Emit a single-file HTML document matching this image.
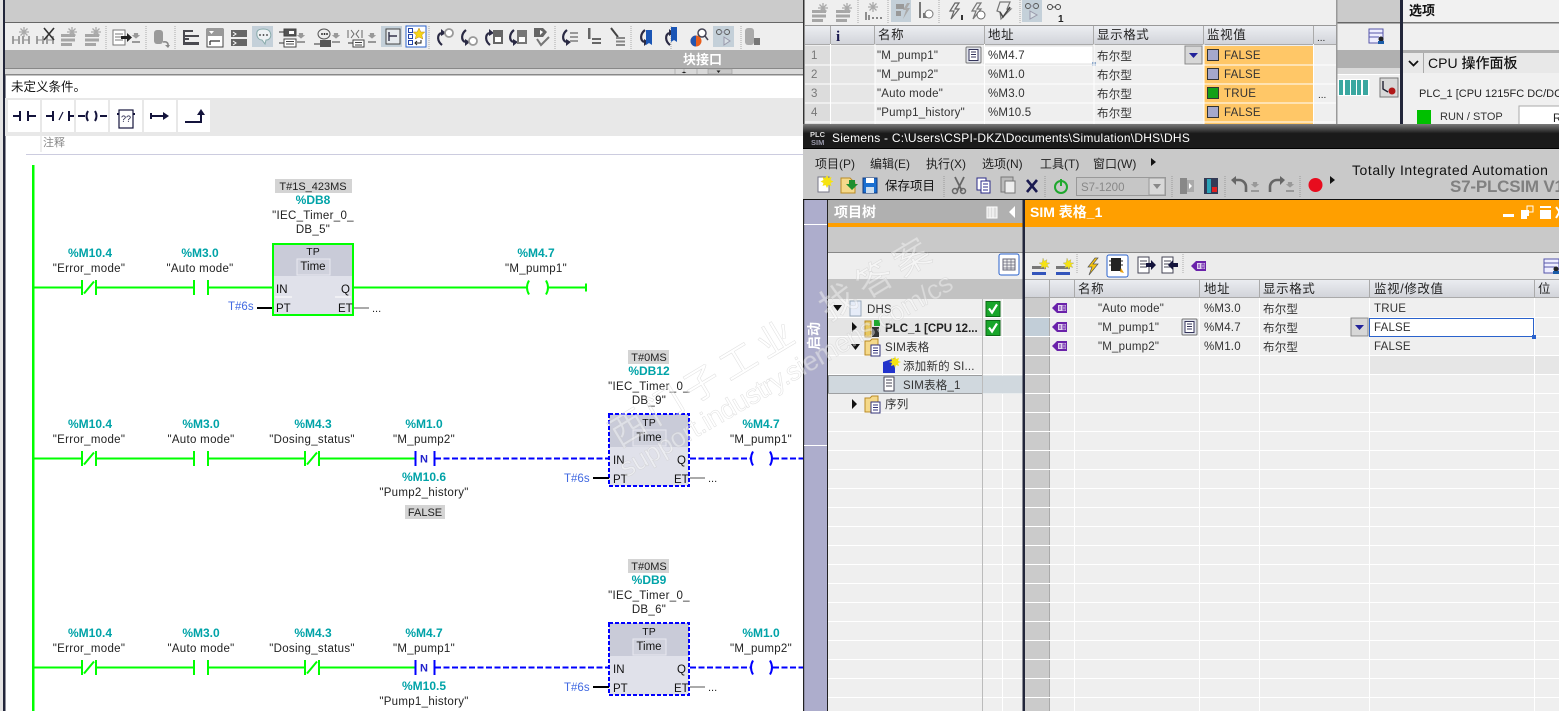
<!DOCTYPE html>
<html><head><meta charset="utf-8"><title>TIA Portal</title>
<style>
html,body{margin:0;padding:0;width:1559px;height:711px;overflow:hidden;background:#fff}
svg{display:block}
text{font-family:"Liberation Sans","Noto Sans CJK SC",sans-serif;font-size:12px;fill:#222}
.t{fill:#00a3a8;font-weight:bold;text-anchor:middle;font-size:12px}
.q{text-anchor:middle;font-size:11.5px;letter-spacing:.3px}
.c{text-anchor:middle}
.p{fill:#4169e1;font-size:11.5px}
.h{font-size:12.5px;letter-spacing:.6px;fill:#222}
.r{font-size:11.5px;letter-spacing:.2px;fill:#333}
.m{font-size:12px;fill:#222}
</style></head><body>
<svg width="1559" height="711" viewBox="0 0 1559 711" xmlns="http://www.w3.org/2000/svg">
<defs>
<linearGradient id="hd" x1="0" y1="0" x2="0" y2="1"><stop offset="0" stop-color="#eceef2"/><stop offset="1" stop-color="#d2d4da"/></linearGradient>
<linearGradient id="tb" x1="0" y1="0" x2="0" y2="1"><stop offset="0" stop-color="#7c7c7c"/><stop offset=".38" stop-color="#1a1a1a"/><stop offset="1" stop-color="#1a1a1a"/></linearGradient>
<g id="nc" fill="none" stroke-width="2"><path d="M0-7.5V7.5M14-7.5V7.5M2 6 12-6"/></g>
<g id="no" fill="none" stroke-width="2"><path d="M0-7.5V7.5M14-7.5V7.5"/></g>
<g id="coil" fill="none" stroke-width="2"><path d="M2-7Q-2 0 2 7M19-7Q23 0 19 7"/></g>
<g id="ast"><path d="M0-5v10M-5 0h10M-3.500-3.500l7 7M3.500-3.500l-7 7" stroke="#aaa" stroke-width="1.300"/></g>
<g id="bars"><path d="M0 7h14v3H0zM0 11.500h14v3H0zM0 16h11v3H0z" fill="#a6a6a6"/><use href="#ast" x="11" y="5"/></g>
<g id="rungst"><path d="M0 9v8M6 9v8M10 9v8M16 9v8" stroke="#8a8a8a" stroke-width="1.600"/><path d="M0 13h5M11 13h5" stroke="#8a8a8a"/></g>
<g id="barsY"><path d="M0 8h14v3H0z" fill="#777"/><path d="M0 14h14v3H0z" fill="#3355bb"/><path d="M11 0l1.300 3.200L15 1.500l-.6 3.200 3.600.3-3 1.800 2 2.700-3.200-.8-.8 3-1.400-3-3 1.300 1.200-3L7 5l3.200-.5z" fill="#f6e312" stroke="#997" stroke-width=".3"/></g>
<g id="doc"><path d="M0 0h12v19H0z" fill="#fff" stroke="#55557a"/><path d="M2 4h8M2 7h8M2 10h8M2 13h8" stroke="#55557a"/></g>
<g id="arrowd"><path d="M-3 0h6v3h3l-6 5-6-5h3z" fill="#999" transform="scale(.7)"/><path d="M-4 8h8v2h-8z" fill="#999"/></g>
<g id="lup"><path d="M5 17C0 13 0 7 4 5" fill="none" stroke="#2a2a44" stroke-width="2.200"/><path d="M4 1l5 4-5 3z" fill="#2a2a44"/></g>
<g id="ldn"><path d="M5 1C0 5 0 11 4 13" fill="none" stroke="#2a2a44" stroke-width="2.200"/><path d="M4 10l5 3-5 4z" fill="#2a2a44"/></g>
<g id="tag"><path d="M0 6 5 1h10v10H5z" fill="#6a22aa"/><path d="M6 3h8v6H6z" fill="#fff" fill-opacity=".8"/><path d="M8 4v4M11 4h2v4h-2z" stroke="#6a22aa" fill="none"/></g>
<g id="chk"><rect width="14" height="15" fill="#18a52a" stroke="#0b6a16"/><path d="M3 7l3 4 5-8" fill="none" stroke="#fff" stroke-width="2.200"/></g>
<g id="lbtn"><rect width="15" height="16" rx="1" fill="#dfe2ea" stroke="#777"/><rect x="3" y="2.500" width="9" height="11" fill="#fff" stroke="#33335a"/><path d="M5 5h5M5 7.500h5M5 10h5" stroke="#33335a"/></g>
<g id="dd"><rect width="17" height="18" fill="#d7d7d7" stroke="#888"/><path d="M4 7h9l-4.500 5z" fill="#22229a"/></g>
<g id="fold"><path d="M0 3h5l2-2h6v16H0z" fill="#f5d98a" stroke="#b98a25"/><rect x="6" y="7" width="9" height="11" fill="#fff" stroke="#33337a"/><path d="M8 10h5M8 12.500h5M8 15h5" stroke="#33337a"/></g>
</defs>

<!-- page -->
<rect width="1559" height="711" fill="#fff"/>
<!-- left editor chrome -->
<rect x="0" y="0" width="3" height="711" fill="#e4e4e4"/>
<rect x="3" y="0" width="2.500" height="711" fill="#22263a"/>
<rect x="5" y="0" width="798" height="22" fill="#cbcbcb"/>
<rect x="5" y="22" width="798" height="1.500" fill="#666"/>
<rect x="5" y="23" width="798" height="27" fill="#eeeeee"/>
<rect x="5" y="50" width="798" height="18" fill="#b0b0b0"/>
<rect x="5" y="68" width="798" height="6" fill="#d9d9d9"/>
<rect x="5" y="68" width="798" height="1" fill="#888"/>
<rect x="5" y="74" width="798" height="1.500" fill="#888"/>
<path d="M675 69v5M684 69v5M697 69v5M708 69h24v5h-24z" stroke="#999" fill="#c8c8c8" stroke-width=".6"/>
<path d="M684 71.500 686.500 73h-5zM718.500 73l2-2.500h-4z" fill="#222"/>
<text x="683" y="64" style="font-size:13px;font-weight:bold;fill:#fff">块接口</text>
<text x="11" y="91" style="font-size:12.500px;fill:#111">未定义条件。</text>
<rect x="5" y="98" width="798" height="38" fill="#e8e8e8"/>
<g fill="#fff"><rect x="8" y="100" width="32" height="32"/><rect x="42" y="100" width="32" height="32"/><rect x="76" y="100" width="32" height="32"/><rect x="110" y="100" width="32" height="32"/><rect x="144" y="100" width="32" height="32"/><rect x="178" y="100" width="32" height="32"/></g>
<g fill="none" stroke="#14143c" stroke-width="2">
<path d="M13 116h7M20 111v10M28 111v10M28 116h8"/>
<path d="M46 116h7M53 111v10M69 111v10M69 116h5"/><path d="M63 112 59 120" stroke-width="1.200"/>
<path d="M78 116h7M100 116h7M88 111q-3 5 0 10M95 111q3 5 0 10"/>
<rect x="119" y="110" width="14" height="18" stroke-width="1.200"/><path d="M117 114h2M133 114h2"/>
<path d="M151 113v6M151 116h15"/>
<path d="M185 122h16v-7"/>
</g>
<path d="M163 112l6 4-6 4zM197 115l4-6 4 6z" fill="#14143c"/>
<text x="126" y="122" class="c" style="font-size:9px;fill:#14143c">??</text>
<rect x="40.500" y="136" width="1" height="16" fill="#ddd"/>
<text x="43" y="146" style="font-size:11px;fill:#888">注释</text>
<rect x="26" y="154" width="777" height="1" fill="#ccccdf"/>

<!-- left toolbar icons -->
<g transform="translate(0,27)">
<use href="#rungst" x="13"/><use href="#ast" x="24" y="5"/>
<use href="#rungst" x="37"/><path d="M44 1l10 12M54 1 44 13" stroke="#333" stroke-width="1.600"/>
<use href="#bars" x="61"/><use href="#bars" x="85"/>
<path d="M106-1v24" stroke="#aaa" stroke-dasharray="1 1"/>
<g transform="translate(113,3)"><rect width="12" height="15" fill="#fff" stroke="#777"/><path d="M2 4h8M2 7h8M2 10h8" stroke="#777"/><path d="M8 6h6V3l5 4.500-5 4.500V9H8z" fill="#222"/></g>
<use href="#arrowd" x="136" y="6"/>
<path d="M146-1v24M175-1v24" stroke="#aaa" stroke-dasharray="1 1"/>
<g transform="translate(154,3)"><rect width="9" height="14" rx="3" fill="#9a9a9a"/><path d="M9 12q6-1 5 5" fill="none" stroke="#888" stroke-width="1.600"/><path d="M11 15l3 3 2-3" fill="#888"/></g>
<g fill="#4a4a50"><path d="M183 3h10v2h-10zM183 8h16v2h-16zM183 11h6v2h-6zM183 15h16v3h-16z"/><path d="M183 3h2v15h-2z"/></g>
<g transform="translate(207,2)"><rect width="16" height="18" fill="#fff" stroke="#444"/><path d="M0 7h16V0H0z" fill="#999"/><path d="M2 2h5l-2.500 3z" fill="#fff"/><path d="M3 12h10M3 12v4" stroke="#333" stroke-width="1.300"/></g>
<g transform="translate(231,3)"><rect width="16" height="16" fill="#666"/><path d="M0 7h16v2H0z" fill="#eee"/><path d="M2 2l3 2-3 2M2 11l3 2-3 2" stroke="#fff" fill="none"/></g>
<rect x="252" y="-1" width="21" height="21" fill="#c4d0d9"/>
<path d="M257 5c1-4 11-4 13 0s0 8-4 8l-1 4-3-4c-3 0-6-3-5-8z" fill="#eef2f4" stroke="#8aa" stroke-width="1"/>
<circle cx="260" cy="8" r=".9" fill="#333"/><circle cx="263.500" cy="8" r=".9" fill="#333"/><circle cx="267" cy="8" r=".9" fill="#333"/>
<g transform="translate(279,2)"><rect x="5" width="12" height="7" fill="#555" stroke="#444"/><rect x="10" y="2" width="5" height="3" fill="#fff"/><rect x="5" y="10" width="12" height="8" fill="#fff" stroke="#444"/><path d="M7 12.500h8M7 15h8" stroke="#444"/><path d="M0 3h5M0 14h5" stroke="#333"/></g>
<use href="#arrowd" x="301" y="6"/>
<g transform="translate(314,2)"><ellipse cx="10" cy="5" rx="6" ry="5" fill="#eee" stroke="#555"/><circle cx="8" cy="5" r=".9"/><circle cx="10.500" cy="5" r=".9"/><circle cx="13" cy="5" r=".9"/><rect x="6" y="11" width="11" height="7" fill="#555"/><path d="M0 15h6" stroke="#333"/></g>
<use href="#arrowd" x="336" y="6"/>
<g transform="translate(348,1)"><path d="M0 2v8M3 2l3 4-3 4M14 2v8M11 2l-3 4 3 4" stroke="#666" fill="none"/><rect x="5" y="12" width="11" height="7" fill="#fff" stroke="#444"/><path d="M7 14.500h7M7 17h7" stroke="#444"/><path d="M0 15h5" stroke="#333"/></g>
<use href="#arrowd" x="372" y="6"/>
<rect x="381" y="-1" width="21" height="21" fill="#c4d0d9"/>
<rect x="386" y="2" width="14" height="15" fill="#e6eaee" stroke="#444"/>
<path d="M389 5v9M389 9h8" stroke="#33334a" stroke-width="1.400"/>
<rect x="406" y="-1" width="20" height="21" fill="#fff" stroke="#2a62cc"/>
<path d="M408.500 1.500h4v4h-4zM408.500 7.500h4v4h-4zM408.500 13.500h4v4h-4z" fill="#fff" stroke="#2244aa"/><path d="M419 1l1.800 4h4l-3 3 1 4-3.800-2-3.800 2 1-4-3-3h4z" fill="#f7d514" stroke="#b98a25" stroke-width=".5"/><path d="M421 13v3h-6M417 14l-2 2 2 2" fill="none" stroke="#222"/>
<path d="M429-1v24M555-1v24M631-1v24M671-1v24M741-1v24" stroke="#aaa" stroke-dasharray="1 1"/>
<use href="#lup" x="437" y="1"/><circle cx="449" cy="6" r="4" fill="#fff" stroke="#999" stroke-width="1.800"/>
<use href="#ldn" x="461" y="2"/><circle cx="473" cy="14" r="4" fill="#fff" stroke="#999" stroke-width="1.800"/>
<use href="#lup" x="485" y="1"/><rect x="493" y="3" width="10" height="14" fill="#666"/><rect x="495" y="10" width="6" height="5" fill="#fff"/>
<use href="#ldn" x="509" y="2"/><rect x="517" y="3" width="10" height="14" fill="#777"/><rect x="519" y="10" width="6" height="5" fill="#fff"/>
<path d="M534 1h9l4 4-4 5h-9z" fill="#666"/><path d="M540 3l3 2-3 3z" fill="#fff"/><path d="M537 12l4 6 8-8" fill="none" stroke="#777" stroke-width="2"/>
<use href="#ldn" x="562" y="2"/><path d="M570 5h8v2h-8zM570 9h8v2h-8zM570 13h8v2h-8z" fill="#999"/>
<path d="M588 1h2.500v11H588zM592 11h9v2h-9zM592 15h9v2h-9z" fill="#666"/>
<path d="M611 1l7 9" stroke="#444" stroke-width="2"/><path d="M616 10h9v2h-9zM616 13.500h9v2h-9zM616 17h9v2h-9z" fill="#888"/>
<use href="#ldn" x="640" y="2"/><path d="M646 3h6v15l-3-2-3 2z" fill="#1a55b5"/>
<use href="#lup" x="665" y="1"/><path d="M671 0h6v15l-3-2-3 2z" fill="#1a55b5"/>
<circle cx="696" cy="14" r="5.500" fill="#e85d1c"/><path d="M696 8.500v11a5.500 5.500 0 0 1 0-11" fill="#2255b0"/><circle cx="702" cy="6" r="4" fill="#fff" stroke="#445" stroke-width="1.500"/><path d="M705 9l3 4" stroke="#445" stroke-width="1.500"/>
<rect x="713" y="-1" width="21" height="21" fill="#c4d0d9"/>
<circle cx="719" cy="5" r="2.500" fill="none" stroke="#555"/><circle cx="727" cy="5" r="2.500" fill="none" stroke="#555"/><path d="M721 5h4M724 10l6 4-6 4z" stroke="#99a" fill="#d8e0e6"/>
<rect x="745" y="1" width="9" height="17" rx="3" fill="#aaa"/><rect x="754" y="11" width="6" height="7" fill="#777"/>
</g>

<!-- rails -->
<rect x="32" y="165" width="2.500" height="546" fill="#00ff00"/>

<!-- rung 1 -->
<g stroke="#00ff00" fill="none" stroke-width="2">
<path d="M33 287.500h49M96 287.500h98M208 287.500h64M354 287.500h173M548 287.500h38"/>
<path d="M586 283.500v8"/>
<use href="#nc" x="82" y="287.500" stroke="#00ff00"/>
<use href="#no" x="194" y="287.500" stroke="#00ff00"/>
<use href="#coil" x="527" y="287.500" stroke="#00ff00"/>
</g>
<text x="90" y="257" class="t">%M10.4</text><text x="89" y="272" class="q">"Error_mode"</text>
<text x="200" y="257" class="t">%M3.0</text><text x="200" y="272" class="q">"Auto mode"</text>
<text x="536" y="257" class="t">%M4.7</text><text x="536" y="272" class="q">"M_pump1"</text>
<rect x="275" y="179" width="77" height="14" fill="#d4d4d4"/>
<text x="313" y="190" class="c" style="font-size:11px">T#1S_423MS</text>
<text x="313" y="204" class="t">%DB8</text>
<text x="313" y="219" class="q">"IEC_Timer_0_</text>
<text x="313" y="233" class="q">DB_5"</text>
<rect x="273" y="244" width="80" height="71" fill="#e0e1ea"/>
<rect x="273" y="244" width="80" height="32" fill="#c9cbd8"/>
<rect x="297" y="259" width="33" height="16" fill="#cfd1dc" stroke="#e8e8ef"/>
<rect x="273" y="244" width="80" height="71" fill="none" stroke="#00ff00" stroke-width="2"/>
<text x="313" y="255" class="c" style="font-size:10.500px;fill:#111">TP</text>
<text x="313" y="270" class="c" style="font-size:11.500px;fill:#111">Time</text>
<text x="276" y="293" style="font-size:11.500px;fill:#111">IN</text><text x="341" y="293" style="font-size:11.500px;fill:#111">Q</text>
<text x="276" y="312" style="font-size:11.500px;fill:#111">PT</text><text x="338" y="312" style="font-size:11.500px;fill:#111">ET</text>
<path d="M275 297h17M335 297h16" stroke="#fff"/>
<text x="228" y="310" class="p">T#6s</text>
<rect x="257" y="307" width="15" height="2" fill="#000"/>
<rect x="354" y="307" width="15" height="2" fill="#aaa"/>
<text x="372" y="312" style="font-size:11px">...</text>

<!-- rung 2 -->
<g fill="none">
<path d="M33 458.500h49M96 458.500h98M208 458.500h97M319 458.500h96" stroke="#00ff00" stroke-width="2"/>
<use href="#nc" x="82" y="458.500" stroke="#00ff00"/>
<use href="#no" x="194" y="458.500" stroke="#00ff00"/>
<use href="#nc" x="305" y="458.500" stroke="#00ff00"/>
<path d="M435 458.500h174M690 458.500h61M773 458.500h30" stroke="#0000ff" stroke-width="2" stroke-dasharray="6 2.500"/>
<path d="M415.500 451v15M434.500 451v15" stroke="#0000ff" stroke-width="2"/>
<use href="#coil" x="751" y="458.500" stroke="#0000ff"/>
</g>
<text x="424" y="462.500" class="c" style="font-size:11px;font-weight:bold;fill:#2222cc">N</text>
<text x="90" y="428" class="t">%M10.4</text><text x="89" y="443" class="q">"Error_mode"</text>
<text x="201" y="428" class="t">%M3.0</text><text x="201" y="443" class="q">"Auto mode"</text>
<text x="313" y="428" class="t">%M4.3</text><text x="312" y="443" class="q">"Dosing_status"</text>
<text x="424" y="428" class="t">%M1.0</text><text x="424" y="443" class="q">"M_pump2"</text>
<text x="424" y="481" class="t">%M10.6</text><text x="424" y="496" class="q">"Pump2_history"</text>
<rect x="405" y="505" width="40" height="14" fill="#d4d4d4"/>
<text x="425" y="516" class="c" style="font-size:11px">FALSE</text>
<text x="761" y="428" class="t">%M4.7</text><text x="761" y="443" class="q">"M_pump1"</text>
<rect x="628" y="350" width="41" height="14" fill="#d4d4d4"/>
<text x="649" y="361" class="c" style="font-size:11px">T#0MS</text>
<text x="649" y="375" class="t">%DB12</text>
<text x="649" y="390" class="q">"IEC_Timer_0_</text>
<text x="649" y="404" class="q">DB_9"</text>
<rect x="609" y="414" width="80" height="72" fill="#e0e1ea"/>
<rect x="609" y="414" width="80" height="33" fill="#c9cbd8"/>
<rect x="633" y="430" width="33" height="16" fill="#cfd1dc" stroke="#e8e8ef"/>
<rect x="609" y="414" width="80" height="72" fill="none" stroke="#0000ff" stroke-width="2" stroke-dasharray="4 2"/>
<text x="649" y="426" class="c" style="font-size:10.500px;fill:#111">TP</text>
<text x="649" y="441" class="c" style="font-size:11.500px;fill:#111">Time</text>
<text x="613" y="464" style="font-size:11.500px;fill:#111">IN</text><text x="677" y="464" style="font-size:11.500px;fill:#111">Q</text>
<text x="613" y="483" style="font-size:11.500px;fill:#111">PT</text><text x="674" y="483" style="font-size:11.500px;fill:#111">ET</text>
<text x="564" y="482" class="p">T#6s</text>
<rect x="593" y="477" width="16" height="2" fill="#000"/>
<rect x="690" y="477" width="15" height="2" fill="#aaa"/>
<text x="708" y="482" style="font-size:11px">...</text>

<!-- rung 3 -->
<g fill="none">
<path d="M33 667.500h49M96 667.500h98M208 667.500h97M319 667.500h96" stroke="#00ff00" stroke-width="2"/>
<use href="#nc" x="82" y="667.500" stroke="#00ff00"/>
<use href="#no" x="194" y="667.500" stroke="#00ff00"/>
<use href="#nc" x="305" y="667.500" stroke="#00ff00"/>
<path d="M435 667.500h174M690 667.500h61M773 667.500h30" stroke="#0000ff" stroke-width="2" stroke-dasharray="6 2.500"/>
<path d="M415.500 660v15M434.500 660v15" stroke="#0000ff" stroke-width="2"/>
<use href="#coil" x="751" y="667.500" stroke="#0000ff"/>
</g>
<text x="424" y="671.500" class="c" style="font-size:11px;font-weight:bold;fill:#2222cc">N</text>
<text x="90" y="637" class="t">%M10.4</text><text x="89" y="652" class="q">"Error_mode"</text>
<text x="201" y="637" class="t">%M3.0</text><text x="201" y="652" class="q">"Auto mode"</text>
<text x="313" y="637" class="t">%M4.3</text><text x="312" y="652" class="q">"Dosing_status"</text>
<text x="424" y="637" class="t">%M4.7</text><text x="424" y="652" class="q">"M_pump1"</text>
<text x="424" y="690" class="t">%M10.5</text><text x="424" y="705" class="q">"Pump1_history"</text>
<text x="761" y="637" class="t">%M1.0</text><text x="761" y="652" class="q">"M_pump2"</text>
<rect x="628" y="559" width="41" height="14" fill="#d4d4d4"/>
<text x="649" y="570" class="c" style="font-size:11px">T#0MS</text>
<text x="649" y="584" class="t">%DB9</text>
<text x="649" y="599" class="q">"IEC_Timer_0_</text>
<text x="649" y="613" class="q">DB_6"</text>
<rect x="609" y="623" width="80" height="72" fill="#e0e1ea"/>
<rect x="609" y="623" width="80" height="33" fill="#c9cbd8"/>
<rect x="633" y="639" width="33" height="16" fill="#cfd1dc" stroke="#e8e8ef"/>
<rect x="609" y="623" width="80" height="72" fill="none" stroke="#0000ff" stroke-width="2" stroke-dasharray="4 2"/>
<text x="649" y="635" class="c" style="font-size:10.500px;fill:#111">TP</text>
<text x="649" y="650" class="c" style="font-size:11.500px;fill:#111">Time</text>
<text x="613" y="673" style="font-size:11.500px;fill:#111">IN</text><text x="677" y="673" style="font-size:11.500px;fill:#111">Q</text>
<text x="613" y="692" style="font-size:11.500px;fill:#111">PT</text><text x="674" y="692" style="font-size:11.500px;fill:#111">ET</text>
<text x="564" y="691" class="p">T#6s</text>
<rect x="593" y="686" width="16" height="2" fill="#000"/>
<rect x="690" y="686" width="15" height="2" fill="#aaa"/>
<text x="708" y="691" style="font-size:11px">...</text>

<!-- top right: monitor table -->
<rect x="803" y="0" width="534" height="124" fill="#efefef"/>
<rect x="803" y="0" width="1.500" height="124" fill="#333"/>
<rect x="805" y="25" width="531" height="1" fill="#999"/>
<rect x="805" y="26" width="531" height="18" fill="url(#hd)"/>
<rect x="805" y="44" width="531" height="1" fill="#aaa"/>
<rect x="805" y="46" width="25" height="78" fill="#dcdcdc"/>
<rect x="830" y="46" width="45" height="78" fill="#e6e6e6"/>
<rect x="1204" y="46" width="109" height="78" fill="#ffc767"/>
<rect x="984" y="46" width="109" height="18" fill="#fff" stroke="#ccc" stroke-width=".6"/>
<rect x="1092" y="62" width="4" height="4" fill="#8fa8c8"/>
<g fill="#fff"><rect x="805" y="64.500" width="531" height="1"/><rect x="805" y="83.500" width="531" height="1"/><rect x="805" y="102.500" width="531" height="1"/><rect x="805" y="121.500" width="531" height="1"/></g>
<g fill="#fff"><rect x="830" y="44" width="1" height="80"/><rect x="874.500" y="44" width="1" height="80"/><rect x="984" y="44" width="1" height="80"/><rect x="1093.500" y="44" width="1" height="80"/><rect x="1203.500" y="44" width="1" height="80"/><rect x="1313" y="44" width="1" height="80"/></g>
<g fill="#aaa"><rect x="830" y="26" width="1" height="18"/><rect x="874" y="26" width="1" height="18"/><rect x="984" y="26" width="1" height="18"/><rect x="1093" y="26" width="1" height="18"/><rect x="1203" y="26" width="1" height="18"/><rect x="1313" y="26" width="1" height="18"/></g>
<rect x="1336" y="0" width="1.500" height="124" fill="#999"/>
<text x="836" y="41" style="font-family:'Liberation Serif',serif;font-weight:bold;font-size:15px;fill:#1a1a50">i</text>
<text x="878" y="39" class="h">名称</text><text x="988" y="39" class="h">地址</text><text x="1097" y="39" class="h">显示格式</text><text x="1207" y="39" class="h">监视值</text><text x="1317" y="41" style="font-size:10px">...</text>
<g class="r">
<text x="811" y="59" class="r" style="fill:#777">1</text><text x="811" y="78" class="r" style="fill:#777">2</text><text x="811" y="97" class="r" style="fill:#777">3</text><text x="811" y="116" class="r" style="fill:#777">4</text>
<text x="877" y="59" class="r">"M_pump1"</text><text x="877" y="78" class="r">"M_pump2"</text><text x="877" y="97" class="r">"Auto mode"</text><text x="877" y="116" class="r">"Pump1_history"</text>
<text x="988" y="59" class="r">%M4.7</text><text x="988" y="78" class="r">%M1.0</text><text x="988" y="97" class="r">%M3.0</text><text x="988" y="116" class="r">%M10.5</text>
<text x="1097" y="60" class="r">布尔型</text><text x="1097" y="79" class="r">布尔型</text><text x="1097" y="98" class="r">布尔型</text><text x="1097" y="117" class="r">布尔型</text>
<text x="1224" y="59" class="r">FALSE</text><text x="1224" y="78" class="r">FALSE</text><text x="1224" y="97" class="r">TRUE</text><text x="1224" y="116" class="r">FALSE</text>
</g>
<text x="1318" y="98" style="font-size:10px">...</text>
<use href="#lbtn" x="966" y="47"/><use href="#dd" x="1185" y="46"/>
<g stroke="#333" stroke-width="1">
<rect x="1207.500" y="49.500" width="11" height="11" fill="#a5a8cc"/><rect x="1207.500" y="68.500" width="11" height="11" fill="#a5a8cc"/><rect x="1207.500" y="87.500" width="11" height="11" fill="#12a018"/><rect x="1207.500" y="106.500" width="11" height="11" fill="#a5a8cc"/>
</g>
<!-- monitor toolbar -->
<use href="#bars" x="812" y="3"/><use href="#bars" x="836" y="3"/>
<path d="M858 0v24M888 0v24M939 0v24M1020 0v24" stroke="#aaa" stroke-dasharray="1 1"/>
<use href="#ast" x="873" y="7"/><path d="M866 12v8M869 15v5M872 18h2M876 18h2M880 18h2" stroke="#666" stroke-width="1.400"/>
<rect x="891" y="0" width="20" height="22" fill="#c4d0d9"/><path d="M896 4h8v5h-8zM896 11h5v5h-5z" fill="#999"/><path d="M907 3l-4 7h3l-3 9 7-11h-3l3-5z" fill="#aaa"/>
<path d="M919 2h2v16h-2zM923 13h5v5h-5z" fill="#777"/><circle cx="929" cy="14" r="4" fill="#fff" stroke="#777"/>
<path d="M955 3l-5 8h4l-3 8 8-10h-4l4-6z" fill="none" stroke="#666" stroke-width="1.200"/><path d="M961 15h2v5h-2z" fill="#333"/>
<path d="M977 3l-5 8h4l-3 8 8-10h-4l4-6z" fill="none" stroke="#777" stroke-width="1.200"/><circle cx="981" cy="15" r="4" fill="#fff" stroke="#666"/>
<path d="M1000 2h10l-3 7h4l-6 6-4 4-1-7-3-1z" fill="none" stroke="#777" stroke-width="1.200"/><path d="M1000 12l3 5 7-10" fill="none" stroke="#444" stroke-width="1.500"/>
<rect x="1022" y="0" width="20" height="22" fill="#c4d0d9"/>
<circle cx="1028" cy="6" r="2.500" fill="none" stroke="#555"/><circle cx="1036" cy="6" r="2.500" fill="none" stroke="#555"/><path d="M1030 6h4M1030 11l7 4-7 4z" stroke="#99a" fill="#d8e0e6"/>
<circle cx="1050" cy="7" r="2.500" fill="none" stroke="#444"/><circle cx="1058" cy="7" r="2.500" fill="none" stroke="#444"/><path d="M1052 7h4" stroke="#444"/>
<text x="1058" y="22" style="font-size:10px;font-weight:bold">1</text>

<!-- gray middle column -->
<rect x="1337.500" y="0" width="63" height="124" fill="#eee"/>
<rect x="1337.500" y="0" width="63" height="22" fill="#cbcbcb"/>
<rect x="1337.500" y="22" width="63" height="1.500" fill="#666"/>
<rect x="1337.500" y="50" width="63" height="18" fill="#b0b0b0"/>
<rect x="1337.500" y="68" width="63" height="6" fill="#d9d9d9"/>
<rect x="1337.500" y="74" width="63" height="1" fill="#fff"/>
<g transform="translate(1369,29)"><rect width="14" height="14" fill="#eef" stroke="#55a"/><path d="M0 4h14M0 8h10" stroke="#55a"/><circle cx="12" cy="10" r="2.500" fill="#222"/><rect x="9" y="12" width="6" height="3" fill="#1a5ca8"/></g>
<rect x="1337.500" y="79" width="32" height="17" fill="#fff"/>
<g fill="#3aa7a0"><rect x="1339" y="80" width="4" height="15"/><rect x="1345" y="80" width="5" height="15"/><rect x="1351" y="80" width="5" height="15"/><rect x="1357" y="80" width="4" height="15"/><rect x="1363" y="80" width="5" height="15"/></g>
<rect x="1380" y="78" width="18" height="19" fill="#d8d8d8" stroke="#777"/><path d="M1383 81v8l5 3" fill="none" stroke="#223" stroke-width="1.400"/><circle cx="1392" cy="91" r="3.500" fill="#b01818"/>

<!-- right option panel -->
<rect x="1400" y="0" width="3" height="124" fill="#22263a"/>
<rect x="1403" y="0" width="156" height="124" fill="#f0f0f0"/>
<rect x="1403" y="0" width="156" height="22" fill="#f1f1f1"/>
<rect x="1403" y="22" width="156" height="1.500" fill="#777"/>
<rect x="1403" y="50" width="156" height="3" fill="#b0b0b0"/>
<rect x="1403" y="53" width="156" height="20" fill="#e8e8e8"/>
<rect x="1423" y="53" width="1" height="20" fill="#aaa"/>
<text x="1409" y="15" style="font-size:13px;font-weight:bold;fill:#111">选项</text>
<path d="M1409 61l4.500 4.500 4.500-4.500" fill="none" stroke="#111" stroke-width="1.800"/>
<text x="1428" y="68" style="font-size:14px;fill:#111;font-weight:500">CPU 操作面板</text>
<text x="1419" y="97" style="font-size:11px;fill:#222">PLC_1 [CPU 1215FC DC/DC</text>
<rect x="1417" y="110" width="14" height="14" fill="#00c000"/>
<text x="1440" y="120" style="font-size:11px;fill:#333">RUN / STOP</text>
<rect x="1519" y="106" width="50" height="20" fill="#fff" stroke="#aaa"/>
<text x="1553" y="122" style="font-size:11.500px">R</text>

<!-- PLCSIM window -->
<rect x="803" y="124" width="756" height="25" fill="url(#tb)"/>
<rect x="803" y="149" width="756" height="51" fill="#c9c9c9"/>
<rect x="803" y="148" width="756" height="1" fill="#000"/>
<rect x="803" y="199" width="756" height="1.500" fill="#111"/>
<text x="810" y="137" style="font-size:7.500px;font-weight:bold;fill:#ddd">PLC</text><text x="811" y="145" style="font-size:7.500px;font-weight:bold;fill:#99a">SIM</text>
<text x="832" y="142" style="font-size:12px;fill:#fff;letter-spacing:.25px">Siemens  -  C:\Users\CSPI-DKZ\Documents\Simulation\DHS\DHS</text>
<text x="815" y="168" class="m">项目(P)</text><text x="870" y="168" class="m">编辑(E)</text><text x="926" y="168" class="m">执行(X)</text><text x="982" y="168" class="m">选项(N)</text><text x="1040" y="168" class="m">工具(T)</text><text x="1093" y="168" class="m">窗口(W)</text>
<path d="M1151 158l5 4-5 4zM1330 176l5 4-5 4z" fill="#111"/>
<text x="885" y="190" style="font-size:12.500px;fill:#111">保存项目</text>
<g transform="translate(818,177)"><rect width="11" height="15" fill="#fff" stroke="#778"/><path d="M9-2l1.500 3 3-1-1 3 3 1.500-3 1.500 1 3-3-1-1.500 3-1.500-3-3 1 1-3-3-1.500 3-1.500-1-3 3 1z" fill="#f6e312"/></g>
<g transform="translate(841,177)"><path d="M0 1h9l5 5v10H0z" fill="#f5d98a" stroke="#b98a25"/><path d="M8 3h6v4h3l-6 6-6-6h3z" fill="#1f8f30"/></g>
<g transform="translate(863,178)"><rect width="14" height="15" fill="#1a6fd0" stroke="#123a80"/><rect x="3" width="8" height="5" fill="#fff"/><rect x="3" y="9" width="8" height="6" fill="#cde"/></g>
<path d="M944 176v21M1045 176v21M1172 176v21M1225 176v21M1300 176v21" stroke="#999" stroke-dasharray="1 1"/>
<path d="M955 177l7 14M964 177l-7 14" stroke="#666" stroke-width="1.800"/><circle cx="955" cy="191" r="2.500" fill="none" stroke="#666" stroke-width="1.500"/><circle cx="963" cy="191" r="2.500" fill="none" stroke="#666" stroke-width="1.500"/>
<g transform="translate(977,178)"><rect width="9" height="12" fill="#fff" stroke="#2a2a88"/><rect x="4" y="3" width="9" height="12" fill="#fff" stroke="#2a2a88"/><path d="M6 6h5M6 9h5M6 12h5" stroke="#2a2a88"/></g>
<g transform="translate(1001,177)"><rect width="12" height="15" fill="#bbb" stroke="#777"/><rect x="4" y="4" width="10" height="12" fill="#eee" stroke="#777"/></g>
<path d="M1027 180l10 12M1037 180l-10 12" stroke="#1a1a50" stroke-width="2.600"/>
<circle cx="1061" cy="187" r="6" fill="none" stroke="#1fa82e" stroke-width="2"/><path d="M1061 179v7" stroke="#1fa82e" stroke-width="2"/>
<rect x="1076.500" y="177.500" width="89" height="18" fill="#c6c6c6" stroke="#999"/>
<rect x="1149" y="178" width="16" height="17" fill="#d8d8d8" stroke="#999"/><path d="M1153 184h8l-4 5z" fill="#888"/>
<text x="1081" y="191" style="font-size:11.500px;fill:#888">S7-1200</text>
<path d="M1180 178h7v16h-7z" fill="#888"/><path d="M1187 180h7v12h-7z" fill="#aaa"/><path d="M1189 183l3 3-3 3" fill="#fff"/>
<rect x="1204" y="178" width="14" height="16" fill="#333a55"/><rect x="1207" y="179" width="4" height="14" fill="#29a3b8"/><rect x="1212" y="187" width="5" height="5" fill="#e02020"/>
<path d="M1233 180h6a7 7 0 0 1 7 7v5" fill="none" stroke="#666" stroke-width="2.600" transform="translate(0,0)"/><path d="M1236 176l-5 4 5 5z" fill="#666"/><use href="#arrowd" x="1255" y="182"/>
<path d="M1283 180h-6a7 7 0 0 0-7 7v5" fill="none" stroke="#666" stroke-width="2.600"/><path d="M1280 176l5 4-5 5z" fill="#666"/><use href="#arrowd" x="1290" y="182"/>
<circle cx="1315.500" cy="185" r="7" fill="#e80c1e"/>
<text x="1352" y="175" style="font-size:14px;fill:#111;letter-spacing:.55px">Totally Integrated Automation</text>
<text x="1450" y="192" style="font-size:17px;font-weight:bold;fill:#808080;letter-spacing:-.2px">S7-PLCSIM V1</text>

<!-- PLCSIM body -->
<rect x="803" y="200" width="25" height="511" fill="#adadcc"/>
<rect x="803" y="200" width="1.200" height="511" fill="#222"/>
<rect x="827" y="200" width="1" height="511" fill="#222"/>
<rect x="804" y="224" width="23" height="1" fill="#fff"/>
<rect x="804" y="445" width="23" height="1" fill="#fff"/>
<text transform="translate(819,350) rotate(-90)" style="font-size:14px;font-weight:bold;fill:#fff">启动</text>
<!-- tree -->
<rect x="828" y="200" width="195" height="24" fill="#b0b0b0"/>
<rect x="828" y="223" width="195" height="4" fill="#ff9f00"/>
<rect x="828" y="227" width="195" height="25" fill="#c9c9c9"/>
<rect x="828" y="252" width="195" height="1" fill="#888"/>
<rect x="828" y="253" width="195" height="26" fill="#eee"/>
<rect x="828" y="279" width="195" height="20" fill="#c2c2c2"/>
<rect x="828" y="299" width="195" height="412" fill="#efefef"/>
<text x="834" y="217" style="font-size:14px;font-weight:bold;fill:#fff">项目树</text>
<path d="M987 207h10v11h-10zM990 207v11M993 207v11" fill="#ddd" stroke="#fff"/>
<path d="M1015 206v12l-6-6z" fill="#fff"/>
<rect x="999" y="254" width="20" height="21" rx="2" fill="#fff" stroke="#2a62cc"/>
<rect x="1003" y="259" width="12" height="11" fill="#eee" stroke="#667"/><path d="M1003 262h12M1003 265h12M1003 268h12M1007 259v11M1011 259v11" stroke="#667" stroke-width=".7"/>
<g fill="#fff">
<rect x="828" y="317" width="195" height="1"/><rect x="828" y="336" width="195" height="1"/><rect x="828" y="355" width="195" height="1"/><rect x="828" y="374" width="195" height="1"/><rect x="828" y="393" width="195" height="1"/><rect x="828" y="412" width="195" height="1"/><rect x="828" y="431" width="195" height="1"/><rect x="828" y="450" width="195" height="1"/><rect x="828" y="469" width="195" height="1"/><rect x="828" y="488" width="195" height="1"/><rect x="828" y="507" width="195" height="1"/><rect x="828" y="526" width="195" height="1"/><rect x="828" y="545" width="195" height="1"/><rect x="828" y="564" width="195" height="1"/><rect x="828" y="583" width="195" height="1"/><rect x="828" y="602" width="195" height="1"/><rect x="828" y="621" width="195" height="1"/><rect x="828" y="640" width="195" height="1"/><rect x="828" y="659" width="195" height="1"/><rect x="828" y="678" width="195" height="1"/><rect x="828" y="697" width="195" height="1"/>
<rect x="1002" y="299" width="1" height="412"/>
</g>
<rect x="828" y="318" width="174" height="18" fill="#e4e4e4"/>
<rect x="828" y="375.500" width="195" height="18" fill="#d0d8de"/>
<rect x="828.500" y="375.500" width="154" height="18" fill="none" stroke="#555" stroke-dasharray="1 1"/>
<rect x="982" y="299" width="1" height="412" fill="#bbb"/>
<path d="M833 305h9l-4.500 6zM851 344h9l-4.500 6zM852 322l5 5-5 5zM852 399l5 5-5 5z" fill="#111"/>
<rect x="850" y="301" width="11" height="15" fill="#e6ecf8" stroke="#9ab"/>
<text x="867" y="313" class="r">DHS</text>
<use href="#chk" x="986" y="301.500"/><use href="#chk" x="986" y="320.500"/>
<g transform="translate(865,320)"><path d="M0 1h6v16H0z" fill="#e8c860" stroke="#b98a25"/><rect x="7" y="7" width="7" height="10" fill="#333"/><rect x="9" y="0" width="6" height="6" fill="#1fa82e"/></g>
<text x="885" y="332" style="font-size:11.500px;font-weight:bold;fill:#222">PLC_1 [CPU 12...</text>
<use href="#fold" x="865" y="338"/>
<text x="885" y="351" class="r">SIM表格</text>
<path d="M883 362l12-4v15h-12z" fill="#2233cc"/><path d="M895 356l1 3 3-1-1 3 3 1-3 1 1 3-3-1-1 3-1-3-3 1 1-3-3-1 3-1-1-3 3 1z" fill="#f6e312"/>
<text x="903" y="370" class="r">添加新的 SI...</text>
<g transform="translate(884,377)"><rect width="10" height="14" fill="#fff" stroke="#445"/><path d="M2 3h6M2 6h6M2 9h6" stroke="#445"/></g>
<text x="903" y="389" class="r">SIM表格_1</text>
<use href="#fold" x="865" y="395"/>
<text x="885" y="408" class="r">序列</text>
<!-- divider -->
<rect x="1022.500" y="200" width="2.500" height="511" fill="#22263a"/>
<!-- sim table -->
<rect x="1025" y="200" width="534" height="27" fill="#ff9f00"/>
<rect x="1025" y="227" width="534" height="25" fill="#c9c9c9"/>
<rect x="1025" y="252" width="534" height="1" fill="#888"/>
<rect x="1025" y="253" width="534" height="26" fill="#ececec"/>
<text x="1030" y="217" style="font-size:14px;font-weight:bold;fill:#fff">SIM 表格_1</text>
<rect x="1503" y="214" width="11" height="3" fill="#fff"/><path d="M1521 210h8v6h-2v3h-6z" fill="#fff"/><rect x="1527" y="206" width="6" height="6" fill="none" stroke="#fff"/><path d="M1540 206h11v2h-11zM1540 210h11v9h-11z" fill="#fff"/><path d="M1556 207l3 4v2l-3 5" stroke="#fff" stroke-width="2" fill="none"/>
<use href="#barsY" x="1032" y="258"/><use href="#barsY" x="1056" y="258"/>
<path d="M1077 254v20M1183 254v20" stroke="#aaa" stroke-dasharray="1 1"/>
<path d="M1095 258l-7 9h4l-3 8 9-11h-5l5-6z" fill="#f6c412" stroke="#555" stroke-width=".7"/>
<rect x="1107" y="255" width="21" height="22" rx="2" fill="#fff" stroke="#2a62cc"/>
<rect x="1111" y="258" width="10" height="13" fill="#222"/><path d="M1109 261h14M1109 265h14" stroke="#222"/><path d="M1121 268l3 5-4-1z" fill="#e8a010"/>
<g transform="translate(1138,257)"><rect width="11" height="16" fill="#fff" stroke="#445"/><path d="M2 4h7M2 7h7M2 10h7" stroke="#445"/><path d="M8 6h5V3l5 5-5 5v-3H8z" fill="#14143c"/></g>
<g transform="translate(1162,257)"><rect width="11" height="16" fill="#fff" stroke="#445"/><path d="M2 4h7M2 7h7M2 10h7" stroke="#445"/><path d="M16 6h-5V3L6 8l5 5v-3h5z" fill="#14143c"/></g>
<use href="#tag" x="1191" y="260"/>
<g transform="translate(1544,259)"><rect width="15" height="14" fill="#eef" stroke="#55a"/><path d="M0 4h15M0 8h11" stroke="#55a"/><circle cx="12" cy="10" r="2.500" fill="#222"/><rect x="9" y="12" width="6" height="3" fill="#1a5ca8"/></g>

<rect x="1025" y="279" width="534" height="18" fill="url(#hd)"/>
<rect x="1025" y="279" width="534" height="1" fill="#aaa"/>
<rect x="1025" y="297" width="534" height="1" fill="#aaa"/>
<rect x="1025" y="298" width="534" height="413" fill="#efefef"/>
<rect x="1025" y="298" width="24" height="413" fill="#cbcbcb"/>
<rect x="1025" y="318" width="24" height="18" fill="#c2ced8"/>
<rect x="1049" y="298" width="1" height="413" fill="#aaa"/>
<rect x="1369" y="356" width="190" height="18" fill="#e6e6e6"/>
<g fill="#aaa"><rect x="1049" y="279" width="1" height="18"/><rect x="1074" y="279" width="1" height="18"/><rect x="1199" y="279" width="1" height="18"/><rect x="1259" y="279" width="1" height="18"/><rect x="1369" y="279" width="1" height="18"/><rect x="1534" y="279" width="1" height="18"/></g>
<g fill="#fff">
<rect x="1074" y="298" width="1" height="413"/><rect x="1199" y="298" width="1" height="413"/><rect x="1259" y="298" width="1" height="413"/><rect x="1369" y="298" width="1" height="413"/><rect x="1534" y="298" width="1" height="413"/>
<rect x="1025" y="317" width="534" height="1"/><rect x="1025" y="336" width="534" height="1"/><rect x="1025" y="355" width="534" height="1"/><rect x="1025" y="374" width="534" height="1"/><rect x="1025" y="393" width="534" height="1"/><rect x="1025" y="412" width="534" height="1"/><rect x="1025" y="431" width="534" height="1"/><rect x="1025" y="450" width="534" height="1"/><rect x="1025" y="469" width="534" height="1"/><rect x="1025" y="488" width="534" height="1"/><rect x="1025" y="507" width="534" height="1"/><rect x="1025" y="526" width="534" height="1"/><rect x="1025" y="545" width="534" height="1"/><rect x="1025" y="564" width="534" height="1"/><rect x="1025" y="583" width="534" height="1"/><rect x="1025" y="602" width="534" height="1"/><rect x="1025" y="621" width="534" height="1"/><rect x="1025" y="640" width="534" height="1"/><rect x="1025" y="659" width="534" height="1"/><rect x="1025" y="678" width="534" height="1"/><rect x="1025" y="697" width="534" height="1"/>
</g>
<text x="1078" y="293" class="h">名称</text><text x="1204" y="293" class="h">地址</text><text x="1263" y="293" class="h">显示格式</text><text x="1374" y="293" class="h">监视/修改值</text><text x="1538" y="293" class="h">位</text>
<use href="#tag" x="1052" y="302"/><use href="#tag" x="1052" y="321"/><use href="#tag" x="1052" y="340"/>
<text x="1098" y="312" class="r">"Auto mode"</text><text x="1098" y="331" class="r">"M_pump1"</text><text x="1098" y="350" class="r">"M_pump2"</text>
<text x="1204" y="312" class="r">%M3.0</text><text x="1204" y="331" class="r">%M4.7</text><text x="1204" y="350" class="r">%M1.0</text>
<text x="1263" y="313" class="r">布尔型</text><text x="1263" y="332" class="r">布尔型</text><text x="1263" y="351" class="r">布尔型</text>
<use href="#lbtn" x="1182" y="319"/><use href="#dd" x="1351" y="318"/>
<rect x="1369.500" y="318.500" width="164" height="18" fill="#fff" stroke="#2a62cc"/>
<rect x="1532" y="335" width="4" height="4" fill="#2a62cc"/>
<text x="1374" y="312" class="r">TRUE</text><text x="1374" y="331" class="r">FALSE</text><text x="1374" y="350" class="r">FALSE</text>

<!-- watermark -->
<g style="stroke:#c4c4c4;stroke-opacity:.55;stroke-width:.5">
<text transform="translate(619,448) rotate(-31)" style="font-size:36px;fill:#fff;fill-opacity:.4;letter-spacing:7px">西门子工业<tspan dx="30">找答案</tspan></text>
<text transform="translate(626,478) rotate(-30)" textLength="380" style="font-size:27px;fill:#fff;fill-opacity:.4">support.industry.siemens.com/cs</text>
</g>
</svg>
</body></html>
